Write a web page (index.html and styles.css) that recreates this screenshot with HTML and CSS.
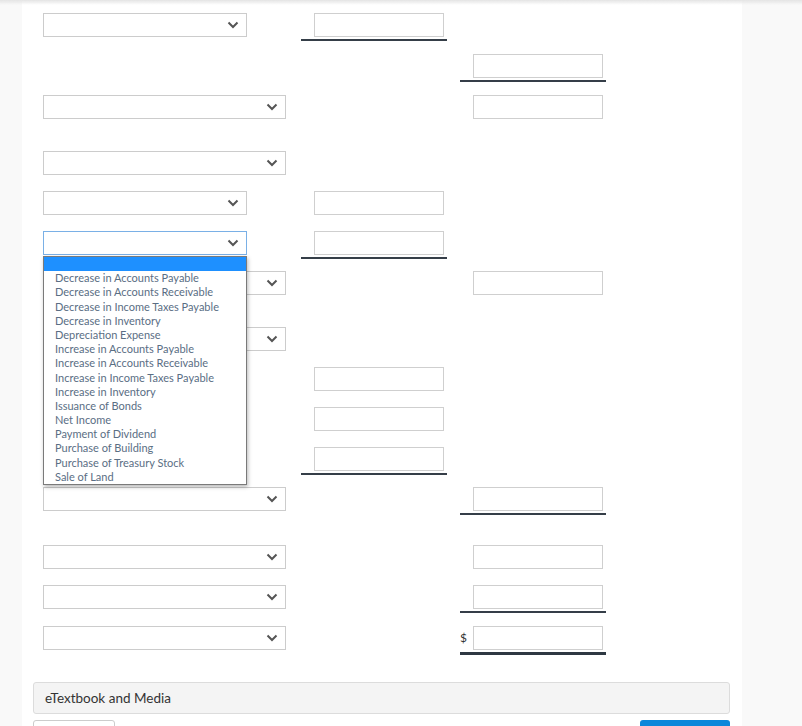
FILE: index.html
```html
<!DOCTYPE html>
<html>
<head>
<meta charset="utf-8">
<link rel="stylesheet" href="styles.css">
</head>
<body>
<div class="topshade"></div>
<div class="panel">
  <div class="sheet">
    <!-- R1 -->
    <div class="c1"><div class="sel narrow"><svg class="chev" viewBox="0 0 12 8"><path d="M1.5 1.5 L6 6 L10.5 1.5"/></svg></div></div>
    <div class="c2"><div class="cell ul"><div class="inp"></div></div></div>
    <div class="c3"></div>
    <!-- R2 -->
    <div class="c1 sp1"></div>
    <div class="c2 sp1"></div>
    <div class="c3 sp1"><div class="cell ul"><div class="inp"></div></div></div>
    <!-- R3 -->
    <div class="c1 sp1"><div class="sel wide"><svg class="chev" viewBox="0 0 12 8"><path d="M1.5 1.5 L6 6 L10.5 1.5"/></svg></div></div>
    <div class="c2 sp1"></div>
    <div class="c3 sp1"><div class="cell"><div class="inp"></div></div></div>
    <!-- R4 -->
    <div class="c1 sp"><div class="sel wide"><svg class="chev" viewBox="0 0 12 8"><path d="M1.5 1.5 L6 6 L10.5 1.5"/></svg></div></div>
    <div class="c2 sp"></div>
    <div class="c3 sp"></div>
    <!-- R5 -->
    <div class="c1"><div class="sel narrow"><svg class="chev" viewBox="0 0 12 8"><path d="M1.5 1.5 L6 6 L10.5 1.5"/></svg></div></div>
    <div class="c2"><div class="cell"><div class="inp"></div></div></div>
    <div class="c3"></div>
    <!-- R6 -->
    <div class="c1 holder">
      <div class="sel narrow focus"><svg class="chev" viewBox="0 0 12 8"><path d="M1.5 1.5 L6 6 L10.5 1.5"/></svg></div>
      <ul class="list">
        <li class="hl">&nbsp;</li>
        <li>Decrease in Accounts Payable</li>
        <li>Decrease in Accounts Receivable</li>
        <li>Decrease in Income Taxes Payable</li>
        <li>Decrease in Inventory</li>
        <li>Depreciation Expense</li>
        <li>Increase in Accounts Payable</li>
        <li>Increase in Accounts Receivable</li>
        <li>Increase in Income Taxes Payable</li>
        <li>Increase in Inventory</li>
        <li>Issuance of Bonds</li>
        <li>Net Income</li>
        <li>Payment of Dividend</li>
        <li>Purchase of Building</li>
        <li>Purchase of Treasury Stock</li>
        <li>Sale of Land</li>
      </ul>
    </div>
    <div class="c2"><div class="cell ul"><div class="inp"></div></div></div>
    <div class="c3"></div>
    <!-- R7 -->
    <div class="c1"><div class="sel wide"><svg class="chev" viewBox="0 0 12 8"><path d="M1.5 1.5 L6 6 L10.5 1.5"/></svg></div></div>
    <div class="c2"></div>
    <div class="c3"><div class="cell"><div class="inp"></div></div></div>
    <!-- R8 -->
    <div class="c1 sp"><div class="sel wide"><svg class="chev" viewBox="0 0 12 8"><path d="M1.5 1.5 L6 6 L10.5 1.5"/></svg></div></div>
    <div class="c2 sp"></div>
    <div class="c3 sp"></div>
    <!-- R9 -->
    <div class="c1"></div>
    <div class="c2"><div class="cell"><div class="inp"></div></div></div>
    <div class="c3"></div>
    <!-- R10 -->
    <div class="c1"></div>
    <div class="c2"><div class="cell"><div class="inp"></div></div></div>
    <div class="c3"></div>
    <!-- R11 -->
    <div class="c1"></div>
    <div class="c2"><div class="cell ul"><div class="inp"></div></div></div>
    <div class="c3"></div>
    <!-- R12 -->
    <div class="c1"><div class="sel wide"><svg class="chev" viewBox="0 0 12 8"><path d="M1.5 1.5 L6 6 L10.5 1.5"/></svg></div></div>
    <div class="c2"></div>
    <div class="c3"><div class="cell ul"><div class="inp"></div></div></div>
    <!-- R13 -->
    <div class="c1 sp2"><div class="sel wide"><svg class="chev" viewBox="0 0 12 8"><path d="M1.5 1.5 L6 6 L10.5 1.5"/></svg></div></div>
    <div class="c2 sp2"></div>
    <div class="c3 sp2"><div class="cell"><div class="inp"></div></div></div>
    <!-- R14 -->
    <div class="c1"><div class="sel wide"><svg class="chev" viewBox="0 0 12 8"><path d="M1.5 1.5 L6 6 L10.5 1.5"/></svg></div></div>
    <div class="c2"></div>
    <div class="c3"><div class="cell ul"><div class="inp"></div></div></div>
    <!-- R15 -->
    <div class="c1 sp1"><div class="sel wide"><svg class="chev" viewBox="0 0 12 8"><path d="M1.5 1.5 L6 6 L10.5 1.5"/></svg></div></div>
    <div class="c2 sp1"></div>
    <div class="c3 sp1"><div class="cell dul"><span class="dollar">$</span><div class="inp"></div></div></div>
  </div>

  <div class="footer">
    <div class="media">eTextbook and Media</div>
    <div class="buttons">
      <div class="btn btn-white"></div>
      <div class="btn btn-blue"></div>
    </div>
  </div>
</div>
</body>
</html>
```

FILE: styles.css
```css
html, body {
  margin: 0;
  padding: 0;
}
body {
  background: #f9f9f9;
  font-family: Lato, "Open Sans", "Liberation Sans", sans-serif;
  color: #333;
  overflow: hidden;
}
.topshade {
  position: fixed;
  top: 0;
  left: 0;
  right: 0;
  height: 5px;
  background: linear-gradient(#e4e4e4, rgba(240,240,240,0));
  z-index: 5;
}
.panel {
  margin-left: 22px;
  width: 720px;
  min-height: 726px;
  background: #fff;
  box-sizing: border-box;
  padding-top: 13px;
}
.sheet {
  display: grid;
  grid-template-columns: 258px 159px 146px;
  grid-auto-rows: auto;
  row-gap: 16px;
  padding-left: 21px;
  align-items: start;
}
.sp1 { margin-top: 1px; }
.sp { margin-top: 16px; }
.sp2 { margin-top: 18px; }
.c1, .c2, .c3 { height: 24px; }
.holder { position: relative; z-index: 3; }

.sel {
  box-sizing: border-box;
  height: 24px;
  border: 1px solid #cccccc;
  background: #fff;
  display: flex;
  align-items: center;
  justify-content: flex-end;
  padding-right: 7px;
}
.sel.narrow { width: 204px; }
.sel.wide { width: 243px; }
.sel.focus { border-color: #7ab0e6; }
.chev {
  width: 12px;
  height: 8px;
  fill: none;
  stroke: #555;
  stroke-width: 2;
  stroke-linecap: butt;
}

.cell {
  box-sizing: border-box;
  width: 146px;
  padding-left: 13px;
  padding-bottom: 2px;
  display: flex;
  align-items: center;
  position: relative;
}
.cell.ul { border-bottom: 2px solid #353e48; }
.cell.dul { border-bottom: 3px solid #2e3842; padding-bottom: 2px; }
.inp {
  box-sizing: border-box;
  width: 130px;
  height: 24px;
  border: 1px solid #cfcfcf;
  background: #fff;
}
.dollar {
  position: absolute;
  left: 0;
  top: 4px;
  font-size: 12px;
  color: #333;
}

.list {
  position: absolute;
  left: 0;
  top: 25px;
  width: 204px;
  box-sizing: border-box;
  margin: 0;
  padding: 0;
  list-style: none;
  background: #fff;
  border: 1px solid #7a7a7a;
  box-shadow: 1px 2px 4px rgba(0,0,0,0.28);
}
.list li {
  height: 14.2px;
  line-height: 14.2px;
  font-size: 11px;
  padding-left: 11px;
  color: #5a6e84;
  white-space: nowrap;
}
.list li.hl {
  background: #1e90ff;
}

.footer {
  padding: 32px 12px 0 11px;
}
.media {
  box-sizing: border-box;
  height: 32px;
  background: #f4f4f4;
  border: 1px solid #dcdcdc;
  border-radius: 3px;
  padding-left: 11px;
  display: flex;
  align-items: center;
  font-size: 13.5px;
  color: #333;
}
.buttons {
  margin-top: 6px;
  display: flex;
  justify-content: space-between;
}
.btn {
  height: 32px;
  border-radius: 3px;
  box-sizing: border-box;
}
.btn-white {
  width: 82px;
  border: 1px solid #ccc;
  background: #fff;
}
.btn-blue {
  width: 90px;
  background: #0b87da;
}
```
